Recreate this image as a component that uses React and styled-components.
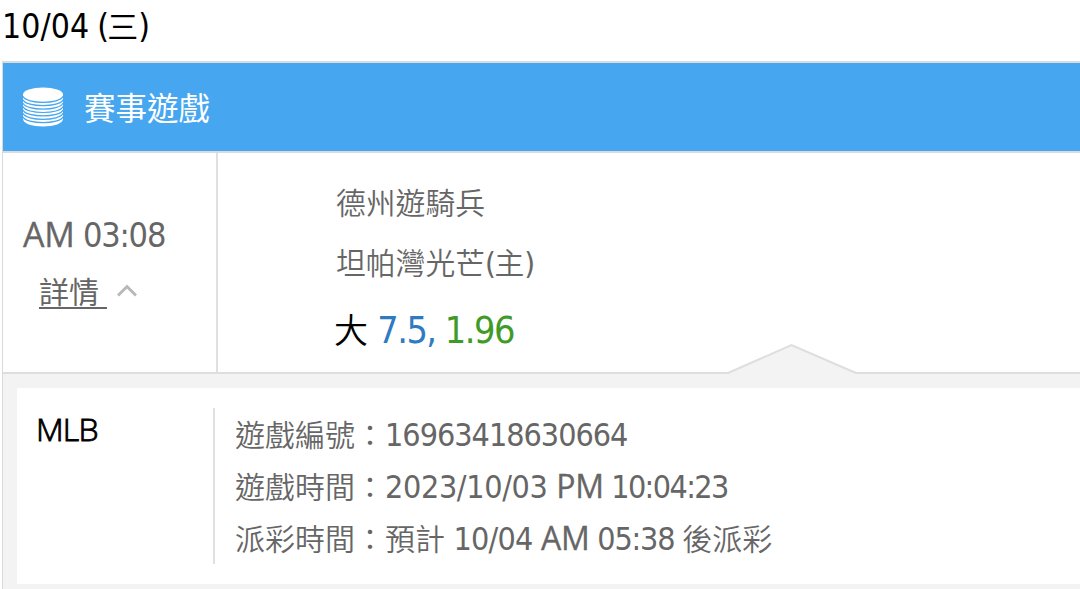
import styled, { createGlobalStyle } from 'styled-components'

const GlobalStyle = createGlobalStyle`
    * {
        box-sizing: border-box;
    }

    body {
        margin: 0;
        background-color: #fff;
        overflow: hidden;
        font-family: "Noto Sans CJK TC", sans-serif;
        font-weight: 350;
        color: #666;
    }
`

const Page = styled.div`
    width: 1080px;
    height: 589px;
    overflow: hidden;
    display: flex;
    flex-direction: column;
`

const Latin = styled.span`
    font-family: "DejaVu Sans Condensed", "Open Sans", sans-serif;
    font-size: ${({ $size }) => $size}px;
    font-stretch: condensed;
    font-weight: 400;
    letter-spacing: ${({ $gap = 0 }) => $gap}px;
    line-height: 1;
`

const Meridiem = styled.span`
    font-family: "Open Sans", sans-serif;
    font-size: ${({ $size }) => $size}px;
    font-weight: 400;
    letter-spacing: -0.3px;
    line-height: 1;
    -webkit-text-stroke: 0.3px currentColor;
`

const DateTitle = styled.h1`
    margin: 0;
    height: 61px;
    padding: 0 0 0 2px;
    font-size: 31px;
    font-weight: 400;
    line-height: 50px;
    color: #000;
    white-space: pre;
`

const Board = styled.section`
    flex: 1;
    margin-left: 2px;
    border-left: 1px solid #d9d9d9;
    border-top: 2px solid #d9dcde;
    display: flex;
    flex-direction: column;
`

const BoardHeader = styled.header`
    display: flex;
    align-items: center;
    gap: 21px;
    height: 90px;
    padding-left: 20px;
    background-color: #46a6ef;
    border-bottom: 2px solid #d9dcde;

    svg {
        display: block;
    }
`

const BoardTitle = styled.h2`
    margin: 0;
    font-size: 31.5px;
    font-weight: 400;
    line-height: 86px;
    height: 88px;
    color: #fff;
`

const BetRow = styled.div`
    position: relative;
    display: flex;
    height: 221px;
    border-bottom: 2px solid #dedede;
`

const TimeCell = styled.div`
    width: 215px;
    padding: 57px 0 0 20px;
    border-right: 2px solid #e0e0e0;
`

const Time = styled.div`
    height: 53px;
    line-height: 60px;
    white-space: pre;
`

const DetailLink = styled.div`
    display: flex;
    align-items: center;
    gap: 10px;
    height: 58px;
    padding-left: 16px;
    font-size: 30px;
    font-weight: 400;

    svg {
        margin-bottom: 4px;
    }
`

const LinkText = styled.span`
    display: block;
    width: 68px;
    height: 34px;
    line-height: 31px;
    border-bottom: 2px solid #666;
`

const BetCell = styled.div`
    padding: 18px 0 0 118px;
`

const Team = styled.div`
    height: 60px;
    font-size: 29.8px;
    line-height: 60px;
    white-space: pre;
`

const Odds = styled.div`
    height: 70px;
    margin-left: -2px;
    font-size: 34px;
    line-height: 76px;
    color: #000;
    white-space: pre;
`

const OddsValue = styled(Latin)`
    color: ${({ $tone }) => ($tone === 'line' ? '#2f7bc0' : '#3f9a28')};
`

const Notch = styled.svg`
    position: absolute;
    left: 723px;
    bottom: -2px;
`

const DetailPanel = styled.div`
    flex: 1;
    padding: 14px 0 4px 14px;
    background-color: #f3f3f3;
`

const DetailCard = styled.div`
    display: flex;
    height: 196px;
    padding: 20px 0;
    background-color: #fff;
`

const League = styled.div`
    width: 198px;
    padding-left: 19px;
    border-right: 2px solid #e0e0e0;
    font-family: "Open Sans", sans-serif;
    font-size: 32px;
    letter-spacing: -0.8px;
    line-height: 42px;
    color: #000;
    -webkit-text-stroke: 0.9px currentColor;
`

const InfoList = styled.div`
    padding-left: 20px;
`

const InfoLine = styled.div`
    height: 52px;
    font-size: 30px;
    line-height: 50px;
    white-space: pre;
`

const CoinsIcon = () => (
    <svg width="40" height="40" viewBox="0 0 40 40">
        <path d="M0 7.500V32C0 36.500 9 39.500 20 39.500S40 36.500 40 32V7.500Z" fill="#fff" />
        <ellipse cx="20" cy="7.500" rx="20" ry="7" fill="#fff" />
        {[0, 1, 2, 3, 4, 5, 6].map((i) => (
            <path
                key={i}
                d={`M0 ${9.3 + i * 3.4}C3 ${17.3 + i * 3.4} 37 ${17.3 + i * 3.4} 40 ${9.3 + i * 3.4}`}
                fill="none"
                stroke="#46a6ef"
                strokeWidth="1.200"
            />
        ))}
    </svg>
)

const ChevronUp = () => (
    <svg width="20" height="13" viewBox="0 0 20 13">
        <path d="M1 11.500L10 2.500L19 11.500" fill="none" stroke="#b8b8b8" strokeWidth="3" />
    </svg>
)

const info = [
    { label: '遊戲編號：', before: '16963418630664', gap: -1 },
    { label: '遊戲時間：', before: '2023/10/03 ', meridiem: 'PM', time: ' 10:04:23', gap: -0.35, timeGap: -1.6 },
    { label: '派彩時間：預計', before: ' 10/04 ', meridiem: 'AM', time: ' 05:38 ', after: '後派彩', gap: -0.75, timeGap: -1.2 },
]

export default function App() {
    return (
        <Page>
            <GlobalStyle />
            <DateTitle>
                <Latin $size={33.5} $gap={0.1}>10/04</Latin>
                <Latin $size={33.5} $gap={-1.7}> (</Latin>三<Latin $size={33.5}>)</Latin>
            </DateTitle>

            <Board>
                <BoardHeader>
                    <CoinsIcon />
                    <BoardTitle>賽事遊戲</BoardTitle>
                </BoardHeader>

                <BetRow>
                    <TimeCell>
                        <Time>
                            <Meridiem $size={34}>AM</Meridiem>
                            <Latin $size={34} $gap={-1.2}> 03:08</Latin>
                        </Time>
                        <DetailLink>
                            <LinkText>詳情</LinkText>
                            <ChevronUp />
                        </DetailLink>
                    </TimeCell>

                    <BetCell>
                        <Team>德州遊騎兵</Team>
                        <Team>坦帕灣光芒<Latin $size={31} $gap={-1.5}>(</Latin>主<Latin $size={31}>)</Latin></Team>
                        <Odds>
                            大<OddsValue $size={37.5} $gap={-1.5} $tone="line"> 7.5,</OddsValue>
                            <OddsValue $size={37.5} $gap={-1.5} $tone="rate"> 1.96</OddsValue>
                        </Odds>
                    </BetCell>

                    <Notch width="132" height="31" viewBox="0 0 132 31">
                        <path d="M2 31V29.500L65.500 2L130 29.500V31Z" fill="#f3f3f3" />
                        <path d="M2 30L65.500 2L130 30" fill="none" stroke="#dedede" strokeWidth="2" />
                    </Notch>
                </BetRow>

                <DetailPanel>
                    <DetailCard>
                        <League>MLB</League>
                        <InfoList>
                            {info.map((item) => (
                                <InfoLine key={item.label}>
                                    {item.label}
                                    <Latin $size={32} $gap={item.gap}>{item.before}</Latin>
                                    {item.meridiem && <Meridiem $size={32}>{item.meridiem}</Meridiem>}
                                    {item.time && <Latin $size={32} $gap={item.timeGap}>{item.time}</Latin>}
                                    {item.after}
                                </InfoLine>
                            ))}
                        </InfoList>
                    </DetailCard>
                </DetailPanel>
            </Board>
        </Page>
    )
}
